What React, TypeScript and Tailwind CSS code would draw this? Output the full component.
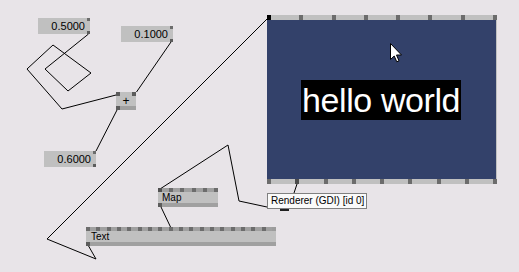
import React from 'react';

const font = "font-['Liberation_Sans',Arial,sans-serif]";

// row of inlet/outlet pins spread over the node width
const PinRow = ({ count, dark = [], light = [], className }: { count: number; dark?: number[]; light?: number[]; className: string }) => (
  <div className={`flex justify-between ${className}`}>
    {Array.from({ length: count }).map((_, i) => (
      <div
        key={i}
        className={`w-[4px] h-full ${dark.includes(i) ? 'bg-[#505050]' : light.includes(i) ? 'bg-[#9c9c9c]' : 'bg-[#6c6c6c]'}`}
      />
    ))}
  </div>
);

const NumberBox = ({ value, pos }: { value: string; pos: string }) => (
  <div className={`absolute ${pos} w-[52px] h-[16px] bg-[#c0c0c0] flex`}>
    <div className={`flex-1 text-right pr-[2px] text-[11px] leading-[16px] text-black ${font}`}>{value}</div>
    <div className="w-[3px] flex flex-col justify-between">
      <div className="h-[3px] bg-[#6c6c6c]" />
      <div className="h-[3px] bg-[#5c5c5c]" />
    </div>
  </div>
);

const Cursor = () => (
  <svg className="absolute left-[123px] top-[23px]" width="13" height="20" viewBox="0 0 13 20">
    <path d="M0.5 0.5 L0.5 16.5 L4.2 13 L6.8 18.8 L9 17.8 L6.5 12 L11.5 12 Z" fill="#fff" stroke="#000" strokeWidth="1" />
  </svg>
);

export default function App() {
  return (
    <div className="relative w-[519px] h-[272px] overflow-hidden bg-[#e8e4e8]">
      {/* links */}
      <svg className="absolute inset-0" width="519" height="272" viewBox="0 0 519 272" fill="none" stroke="#000" strokeWidth="1">
        <polyline points="88.5,34 45,69 68,91 91,73 53,45 27,69 62,109 116,95" />
        <polyline points="171,42 136.5,92" />
        <polyline points="117,110 96,151" />
        <polyline points="88,245 96,259 47,239 268,18" />
        <polyline points="160,189 228,145 239,201 267,207" />
        <polyline points="161,207 171,228" />
        <polyline points="297,184 294,193" />
      </svg>

      <NumberBox value="0.5000" pos="left-[38px] top-[18px]" />
      <NumberBox value="0.1000" pos="left-[121px] top-[26px]" />
      <NumberBox value="0.6000" pos="left-[44px] top-[151px]" />

      {/* + node */}
      <div className="absolute left-[116px] top-[92px] w-[20px] h-[18px] flex flex-col bg-[#c0c0c0]">
        <div className="h-[4px] flex justify-between">
          <div className="w-[4px] bg-[#5c5c5c]" />
          <div className="w-[4px] bg-[#5c5c5c]" />
        </div>
        <div className={`h-[10px] text-center text-[12px] leading-[10px] text-black ${font}`}>+</div>
        <div className="h-[4px] bg-[#a0a0a0]">
          <div className="w-[4px] h-full bg-[#5c5c5c]" />
        </div>
      </div>

      {/* Map node */}
      <div className="absolute left-[158px] top-[188px] w-[60px] flex flex-col bg-[#c0c0c0]">
        <PinRow count={6} dark={[0]} className="h-[4px] bg-[#a0a0a0]" />
        <div className={`h-[11px] pl-[4px] text-[10px] leading-[11px] text-black ${font}`}>Map</div>
        <div className="h-[4px] bg-[#a0a0a0]">
          <div className="w-[4px] h-full bg-[#5c5c5c]" />
        </div>
      </div>

      {/* Text node */}
      <div className="absolute left-[86px] top-[227px] w-[190px] flex flex-col bg-[#c0c0c0]">
        <PinRow count={19} light={[18]} className="h-[4px] bg-[#a0a0a0]" />
        <div className={`h-[11px] pl-[5px] text-[10px] leading-[11px] text-black ${font}`}>Text</div>
        <div className="h-[4px] bg-[#a0a0a0]">
          <div className="w-[4px] h-full bg-[#5c5c5c]" />
        </div>
      </div>

      {/* renderer window */}
      <div className="absolute left-[267px] top-[15px] w-[230px] flex flex-col">
        <div className="h-[5px] bg-[#c0c0c0] flex justify-between">
          {Array.from({ length: 8 }).map((_, i) => (
            <div key={i} className={`w-[4px] h-full ${i === 0 ? 'bg-[#000]' : 'bg-[#6c6c6c]'}`} />
          ))}
        </div>
        <div className="relative h-[159px] bg-[#33416a] border-r border-[#c0c0c0] pt-[60px] pl-[34px]">
          <div className={`w-[160px] h-[40px] bg-black text-white text-[34px] leading-[40px] tracking-[-0.4px] whitespace-nowrap pl-[1px] ${font}`}>
            hello world
          </div>
          <Cursor />
        </div>
        <div className="h-[5px] bg-[#c0c0c0] flex justify-between">
          {Array.from({ length: 9 }).map((_, i) => (
            <div key={i} className={`w-[4px] h-full ${i === 1 ? 'bg-[#4c4c4c]' : 'bg-[#6c6c6c]'}`} />
          ))}
        </div>
      </div>

      {/* hidden renderer node pin */}
      <div className="absolute left-[280px] top-[209px] w-[9px] h-[2px] bg-[#202020]" />

      {/* tooltip label */}
      <div className={`absolute left-[267px] top-[193px] h-[16px] w-[100px] bg-[#fafafa] border border-[#808080] pl-[3px] text-[10px] leading-[14px] text-black whitespace-nowrap ${font}`}>
        Renderer (GDI) [id 0]
      </div>
    </div>
  );
}
